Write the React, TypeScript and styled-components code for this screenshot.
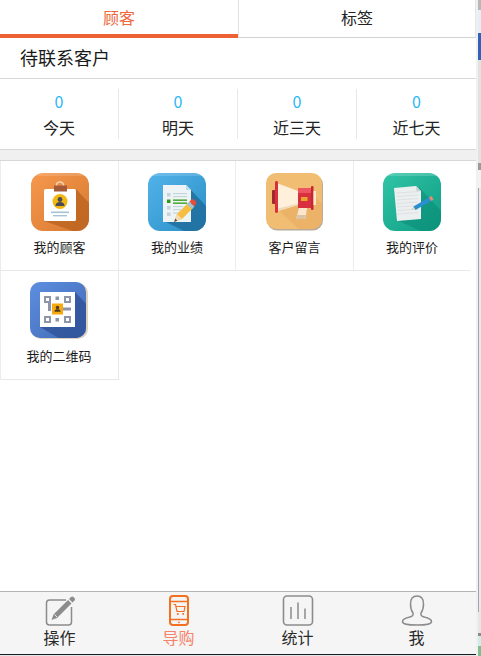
import styled, { createGlobalStyle } from "styled-components";

const GlobalStyle = createGlobalStyle`
  html, body {
    margin: 0;
    padding: 0;
    background: #fff;
    overflow: hidden;
  }
  * {
    box-sizing: border-box;
  }
  body {
    font-family: "Noto Sans CJK SC", "Liberation Sans", sans-serif;
    color: #111;
  }
`;

const Page = styled.div`
  width: 481px;
  height: 656px;
  display: flex;
`;

const Main = styled.div`
  width: 476px;
  height: 656px;
  display: flex;
  flex-direction: column;
`;

const Strip = styled.div`
  width: 5px;
  height: 656px;
  display: flex;
  flex-direction: column;
  background: #efefef;
  border-left: 2px solid #f0f0f0;
`;

const StripPart = styled.div<{ $h: number; $c: string; $rail?: boolean }>`
  height: ${(p) => p.$h}px;
  background: ${(p) =>
    p.$rail ? `linear-gradient(90deg, ${p.$c} 1px, #e8e8e8 1px)` : p.$c};
`;

const Tabs = styled.div`
  display: flex;
  height: 38px;
`;

const Tab = styled.div<{ $active?: boolean }>`
  font-size: 16px;
  line-height: 34px;
  text-align: center;
  width: 238px;
  color: ${(p) => (p.$active ? "#f0683c" : "#222")};
  border-bottom: ${(p) => (p.$active ? "4px solid #ee6135" : "1px solid #d2d2d2")};
  border-left: ${(p) => (p.$active ? "none" : "1px solid #e2e2e2")};
  border-right: ${(p) => (p.$active ? "none" : "1px solid #e6e6e6")};
`;

const Title = styled.div`
  height: 41px;
  padding-left: 20px;
  font-size: 18px;
  line-height: 38px;
  color: #1a1a1a;
  border-bottom: 1px solid #d8d8d8;
`;

const Stats = styled.div`
  height: 70px;
  padding: 10px 0;
  display: grid;
  grid-template-columns: repeat(4, 119px);
`;

const Stat = styled.div`
  height: 50px;
  text-align: center;
  border-right: 1px solid #e8e8e8;
  &:last-child {
    border-right: none;
  }
`;

const StatNum = styled.div`
  font-size: 16px;
  line-height: 24px;
  color: #2db7f5;
`;

const StatLabel = styled.div`
  font-size: 16px;
  line-height: 24px;
  padding-top: 2px;
  color: #222;
`;

const Band = styled.div`
  height: 12px;
  background: #f0f0f0;
  border-top: 1px solid #d8d8d8;
  border-bottom: 1px solid #d8d8d8;
`;

const Grid = styled.div`
  display: grid;
  width: 470px;
  grid-template-columns: 118px 117px 118px 117px;
  grid-template-rows: 110px 109px;
`;

const Cell = styled.div`
  padding-top: 12px;
  display: flex;
  flex-direction: column;
  align-items: center;
  border-left: 1px solid #ececec;
  border-bottom: 1px solid #e8e8e8;
  &:last-child {
    width: 119px;
    padding-top: 11px;
    padding-right: 1px;
    border-right: 1px solid #e8e8e8;
  }
`;

const Tile = styled.svg`
  display: block;
  width: 58px;
  height: 58px;
`;

const CellLabel = styled.div`
  margin-top: 7px;
  font-size: 13px;
  line-height: 18px;
  color: #1a1a1a;
`;

const Spacer = styled.div`
  flex: 1;
`;

const Nav = styled.div`
  height: 64px;
  display: grid;
  grid-template-columns: repeat(4, 119px);
  background: #f5f5f5;
  border-top: 1px solid #b4b4b4;
  border-bottom: 1px solid #1c1c1c;
`;

const NavItem = styled.div<{ $active?: boolean }>`
  display: flex;
  flex-direction: column;
  align-items: center;
  padding-top: 3px;
  font-size: 16px;
  line-height: 22px;
  font-weight: 400;
  color: ${(p) => (p.$active ? "#f5836a" : "#2a2a2a")};
`;

const NavIcon = styled.svg`
  display: block;
  height: 31px;
  width: 34px;
`;

const BottomEdge = styled.div`
  height: 1px;
  background: #dfe7ea;
`;

const CustomerTile = () => (
  <Tile viewBox="0 0 58 58">
    <defs>
      <linearGradient id="orangeBg" x1="0" y1="0" x2="1" y2="1">
        <stop offset="0" stopColor="#f6994d" />
        <stop offset="1" stopColor="#d77a32" />
      </linearGradient>
      <clipPath id="orangeClip">
        <rect width="58" height="58" rx="12" />
      </clipPath>
    </defs>
    <g clipPath="url(#orangeClip)">
      <rect width="58" height="58" fill="url(#orangeBg)" />
      <path d="M45 16 L58 30 V58 H42 L13 48 Z" fill="#b8611f" opacity="0.75" />
      <rect width="58" height="3" fill="#fff" opacity="0.15" />
    </g>
    <path d="M25.5 13 V12 a3.5 3 0 0 1 7 0 V13" fill="none" stroke="#f3d3b0" strokeWidth="1.4" />
    <rect x="13" y="16" width="32" height="32" rx="1.5" fill="#fff" />
    <rect x="23" y="12.5" width="13" height="6" fill="#a45a38" />
    <circle cx="29" cy="28.5" r="7.5" fill="#f2b912" />
    <circle cx="29" cy="26.5" r="2.4" fill="#4b4a58" />
    <path d="M24.5 33 c0 -3 2 -4 4.5 -4 s4.5 1 4.5 4 Z" fill="#4b4a58" />
    <rect x="20" y="38.5" width="18" height="1.6" fill="#a6c4d2" />
    <rect x="22" y="42" width="14" height="1.4" fill="#a6c4d2" />
  </Tile>
);

const SalesTile = () => (
  <Tile viewBox="0 0 58 58">
    <defs>
      <linearGradient id="blueBg" x1="0" y1="0" x2="1" y2="1">
        <stop offset="0" stopColor="#52b3ea" />
        <stop offset="1" stopColor="#2a8fc6" />
      </linearGradient>
      <clipPath id="blueClip">
        <rect width="58" height="58" rx="12" />
      </clipPath>
    </defs>
    <g clipPath="url(#blueClip)">
      <rect width="58" height="58" fill="url(#blueBg)" />
      <path d="M43 17 L58 33 V58 H36 L18 49 Z" fill="#1f6c9b" opacity="0.8" />
      <rect width="58" height="3" fill="#fff" opacity="0.15" />
    </g>
    <path d="M15 12 H38 L43 17 V49 H15 Z" fill="#eef3f5" />
    <path d="M38 12 L43 17 H38 Z" fill="#bcdcea" />
    <rect x="19" y="20" width="3.5" height="3.5" fill="#c4d4da" />
    <rect x="25" y="20" width="14" height="1.1" fill="#c4d4da" />
    <rect x="25" y="23" width="14" height="1.1" fill="#c4d4da" />
    <rect x="19" y="26.5" width="3.5" height="3.5" fill="#2f9a14" />
    <rect x="25" y="26.5" width="14" height="1.3" fill="#2f9a14" />
    <rect x="25" y="29.5" width="14" height="1.3" fill="#2f9a14" />
    <rect x="19" y="33" width="3.5" height="3.5" fill="#c4d4da" />
    <rect x="25" y="33" width="10" height="1.1" fill="#c4d4da" />
    <rect x="25" y="36" width="8" height="1.1" fill="#c4d4da" />
    <rect x="19" y="39.5" width="3.5" height="3.5" fill="#c4d4da" />
    <rect x="25" y="39.5" width="6" height="1.1" fill="#c4d4da" />
    <path d="M26 49 L29 41 L40 30 L45 35 L34 46 Z" fill="#f6bf43" />
    <path d="M26 49 L29 41 L34 46 Z" fill="#f3dcb6" />
    <path d="M26 49 L27.3 45.6 L29.4 47.7 Z" fill="#555" />
    <path d="M39 31 L41.5 28.5 L46.5 33.5 L44 36 Z" fill="#9fc3d4" />
    <path d="M41.5 28.5 L43 27 a2.5 2.5 0 0 1 3.5 0 l1 1 a2.5 2.5 0 0 1 0 3.5 L46.5 33.5 Z" fill="#ea4b35" />
  </Tile>
);

const MessageTile = () => (
  <Tile viewBox="1 0 58 58">
    <defs>
      <clipPath id="sandClip">
        <rect x="1" width="56" height="56" rx="10" />
      </clipPath>
    </defs>
    <rect x="2" y="1.5" width="56" height="56" rx="10" fill="#b9ab98" />
    <g clipPath="url(#sandClip)">
      <rect width="58" height="58" fill="#f1bd72" />
      <path d="M47 20 L58 32 V58 H36 L10 34 Z" fill="#ecb368" />
    </g>
    <rect x="7" y="17" width="4" height="14" rx="1" fill="#9b2b31" />
    <rect x="10" y="8" width="3" height="32" rx="1.4" fill="#d9303c" />
    <path d="M13 10.5 L33 18 V32 L13 38 Z" fill="#fff0dc" />
    <path d="M13 35.5 L33 30.5 V32 L13 38 Z" fill="#f0d8b8" />
    <path d="M33 15 H46 V35 H33 Z" fill="#d8303f" />
    <path d="M33 15 H46 V20 H33 Z" fill="#ee5563" />
    <rect x="46" y="13" width="2.5" height="24" rx="1" fill="#c52634" />
    <rect x="48.5" y="18" width="2.5" height="14" fill="#fbe7cd" />
    <rect x="36" y="24" width="6.5" height="4" fill="#eaa52c" />
    <path d="M34 35 H42 L40.5 46 H31 Z" fill="#f9e6cc" />
    <path d="M32 42 H41 L40.5 46 H31 Z" fill="#dcc4a2" />
  </Tile>
);

const ReviewTile = () => (
  <Tile viewBox="0 0 58 58">
    <defs>
      <linearGradient id="tealBg" x1="0" y1="0" x2="1" y2="1">
        <stop offset="0" stopColor="#31c4a6" />
        <stop offset="1" stopColor="#0f9d84" />
      </linearGradient>
      <clipPath id="tealClip">
        <rect width="58" height="58" rx="12" />
      </clipPath>
    </defs>
    <g clipPath="url(#tealClip)">
      <rect width="58" height="58" fill="url(#tealBg)" />
      <path d="M36 14 L58 38 V58 H38 L16 48 Z" fill="#0a8a74" opacity="0.55" />
      <rect width="58" height="3" fill="#fff" opacity="0.18" />
    </g>
    <path d="M11 15 L33 13 L38 18 L38 46 L14 48 Z" fill="#ecefef" />
    <path d="M33 13 L38 18 L33.6 18.4 Z" fill="#c6d0d0" />
    {[20, 23.5, 27, 30.5, 34, 37.5, 41].map((y) => (
      <path key={y} d="M14 0 L35 -1.5" transform={`translate(0 ${y})`} stroke="#d8dddd" strokeWidth="0.8" />
    ))}
    <path d="M29 37 L30.5 33.5 L46 24.5 L48 28 L32.5 37 Z" fill="#2a8fd0" />
    <path d="M29 37 L30.5 33.5 L32.5 37 Z" fill="#f1dcc0" />
    <path d="M46 24.5 L48.5 23 L50.5 26.5 L48 28 Z" fill="#ee8a72" />
  </Tile>
);

const QrTile = () => (
  <Tile viewBox="0 0 58 58">
    <defs>
      <linearGradient id="indigoBg" x1="0" y1="0" x2="1" y2="1">
        <stop offset="0" stopColor="#5e8fe0" />
        <stop offset="1" stopColor="#4068b4" />
      </linearGradient>
      <clipPath id="indigoClip">
        <rect width="56" height="56" rx="10" />
      </clipPath>
    </defs>
    <rect x="1" y="1" width="57" height="56" rx="10" fill="#ddd2bd" />
    <g clipPath="url(#indigoClip)">
      <rect width="56" height="56" fill="url(#indigoBg)" />
      <path d="M45 10 L58 24 V58 H32 L10 45 Z" fill="#2f5398" opacity="0.8" />
    </g>
    <rect x="10" y="10" width="35" height="35" fill="#fff" />
    <g fill="none" stroke="#8d95a8" strokeWidth="2">
      <rect x="15" y="15" width="5" height="5" />
      <rect x="35" y="15" width="5" height="5" />
      <rect x="15" y="35" width="5" height="5" />
      <rect x="35" y="35" width="5" height="5" />
    </g>
    <g fill="#8d95a8">
      <rect x="25.5" y="14.5" width="3.5" height="3.5" />
      <rect x="18" y="21" width="3" height="8" />
      <rect x="33" y="25.5" width="8" height="3" />
      <rect x="25.5" y="36" width="3.5" height="3.5" />
    </g>
    <rect x="22" y="21.5" width="11" height="11" fill="#f7a90f" />
    <circle cx="27.5" cy="25.5" r="1.7" fill="#4b3a22" />
    <path d="M24.5 29.8 c0 -2 1.3 -2.6 3 -2.6 s3 .6 3 2.6 Z" fill="#4b3a22" />
  </Tile>
);

const EditIcon = () => (
  <NavIcon viewBox="0 0 34 31">
    <path
      d="M23 5 H6.5 a3 3 0 0 0 -3 3 V27 a3 3 0 0 0 3 3 H25.5 a3 3 0 0 0 3 -3 V12"
      fill="none"
      stroke="#8c8c8c"
      strokeWidth="1.5"
    />
    <path d="M8.5 25 L10.5 19.5 L25 5 L28.5 8.5 L14 23 Z" fill="#8c8c8c" />
    <path d="M26 4 L28 2 a1.8 1.8 0 0 1 2.5 0 l1 1 a1.8 1.8 0 0 1 0 2.5 L29.5 7.5 Z" fill="#8c8c8c" />
    <path d="M11.5 19.5 L14 22" stroke="#f5f5f5" strokeWidth="0.9" />
  </NavIcon>
);

const ShopIcon = () => (
  <NavIcon viewBox="0 0 34 31">
    <rect x="8" y="1" width="18" height="29" rx="3" fill="none" stroke="#f37021" strokeWidth="2" />
    <path d="M8 6.5 H26 M8 24.5 H26" stroke="#f37021" strokeWidth="1.6" />
    <circle cx="17" cy="27.3" r="0.9" fill="#f37021" />
    <path
      d="M11.5 9.5 H13.5 L15 16.5 H22 L23 11.5 H14"
      fill="none"
      stroke="#f37021"
      strokeWidth="1.2"
    />
    <circle cx="15.8" cy="19" r="1" fill="#f37021" />
    <circle cx="21.2" cy="19" r="1" fill="#f37021" />
  </NavIcon>
);

const ChartIcon = () => (
  <NavIcon viewBox="0 0 34 31">
    <rect x="2.5" y="1" width="29" height="29" rx="3.5" fill="none" stroke="#8c8c8c" strokeWidth="1.6" />
    <path d="M10 12 V24 M17 7.5 V24 M24 13.5 V24" stroke="#8c8c8c" strokeWidth="1.5" />
  </NavIcon>
);

const PersonIcon = () => (
  <NavIcon viewBox="0 0 34 31">
    <path
      d="M17 1 C12.5 1 10.5 4.5 10.5 9 C10.5 13 11.5 16 13 18 C13.5 20 12.5 21.5 10 22 C5.5 23 2.5 24.5 2.5 26.5 C2.5 29 6 30 17 30 C28 30 31.5 29 31.5 26.5 C31.5 24.5 28.5 23 24 22 C21.5 21.5 20.5 20 21 18 C22.5 16 23.5 13 23.5 9 C23.5 4.5 21.5 1 17 1 Z"
      fill="none"
      stroke="#8c8c8c"
      strokeWidth="1.5"
    />
  </NavIcon>
);

const stats = ["今天", "明天", "近三天", "近七天"];

const entries = [
  { label: "我的顾客", tile: <CustomerTile /> },
  { label: "我的业绩", tile: <SalesTile /> },
  { label: "客户留言", tile: <MessageTile /> },
  { label: "我的评价", tile: <ReviewTile /> },
  { label: "我的二维码", tile: <QrTile /> },
];

const stripParts = [
  { h: 10, c: "#b8b8b8" },
  { h: 23, c: "#e6eefa" },
  { h: 27, c: "#2f62b8" },
  { h: 103, c: "#e2e2e2" },
  { h: 7, c: "#9a9a9a" },
  { h: 18, c: "#f2f2f2" },
  { h: 424, c: "#a0a6ae", rail: true },
  { h: 21, c: "#e6e6e6" },
  { h: 3, c: "#8c8c8c" },
  { h: 10, c: "#cdeee6" },
  { h: 10, c: "#7fc08e" },
];

function App() {
  return (
    <Page>
      <GlobalStyle />
      <Main>
        <Tabs>
          <Tab $active>顾客</Tab>
          <Tab>标签</Tab>
        </Tabs>
        <Title>待联系客户</Title>
        <Stats>
          {stats.map((label) => (
            <Stat key={label}>
              <StatNum>0</StatNum>
              <StatLabel>{label}</StatLabel>
            </Stat>
          ))}
        </Stats>
        <Band />
        <Grid>
          {entries.map((entry) => (
            <Cell key={entry.label}>
              {entry.tile}
              <CellLabel>{entry.label}</CellLabel>
            </Cell>
          ))}
        </Grid>
        <Spacer />
        <Nav>
          <NavItem>
            <EditIcon />
            操作
          </NavItem>
          <NavItem $active>
            <ShopIcon />
            导购
          </NavItem>
          <NavItem>
            <ChartIcon />
            统计
          </NavItem>
          <NavItem>
            <PersonIcon />
            我
          </NavItem>
        </Nav>
        <BottomEdge />
      </Main>
      <Strip>
        {stripParts.map((part, i) => (
          <StripPart key={i} $h={part.h} $c={part.c} $rail={part.rail} />
        ))}
      </Strip>
    </Page>
  );
}

export default App;
